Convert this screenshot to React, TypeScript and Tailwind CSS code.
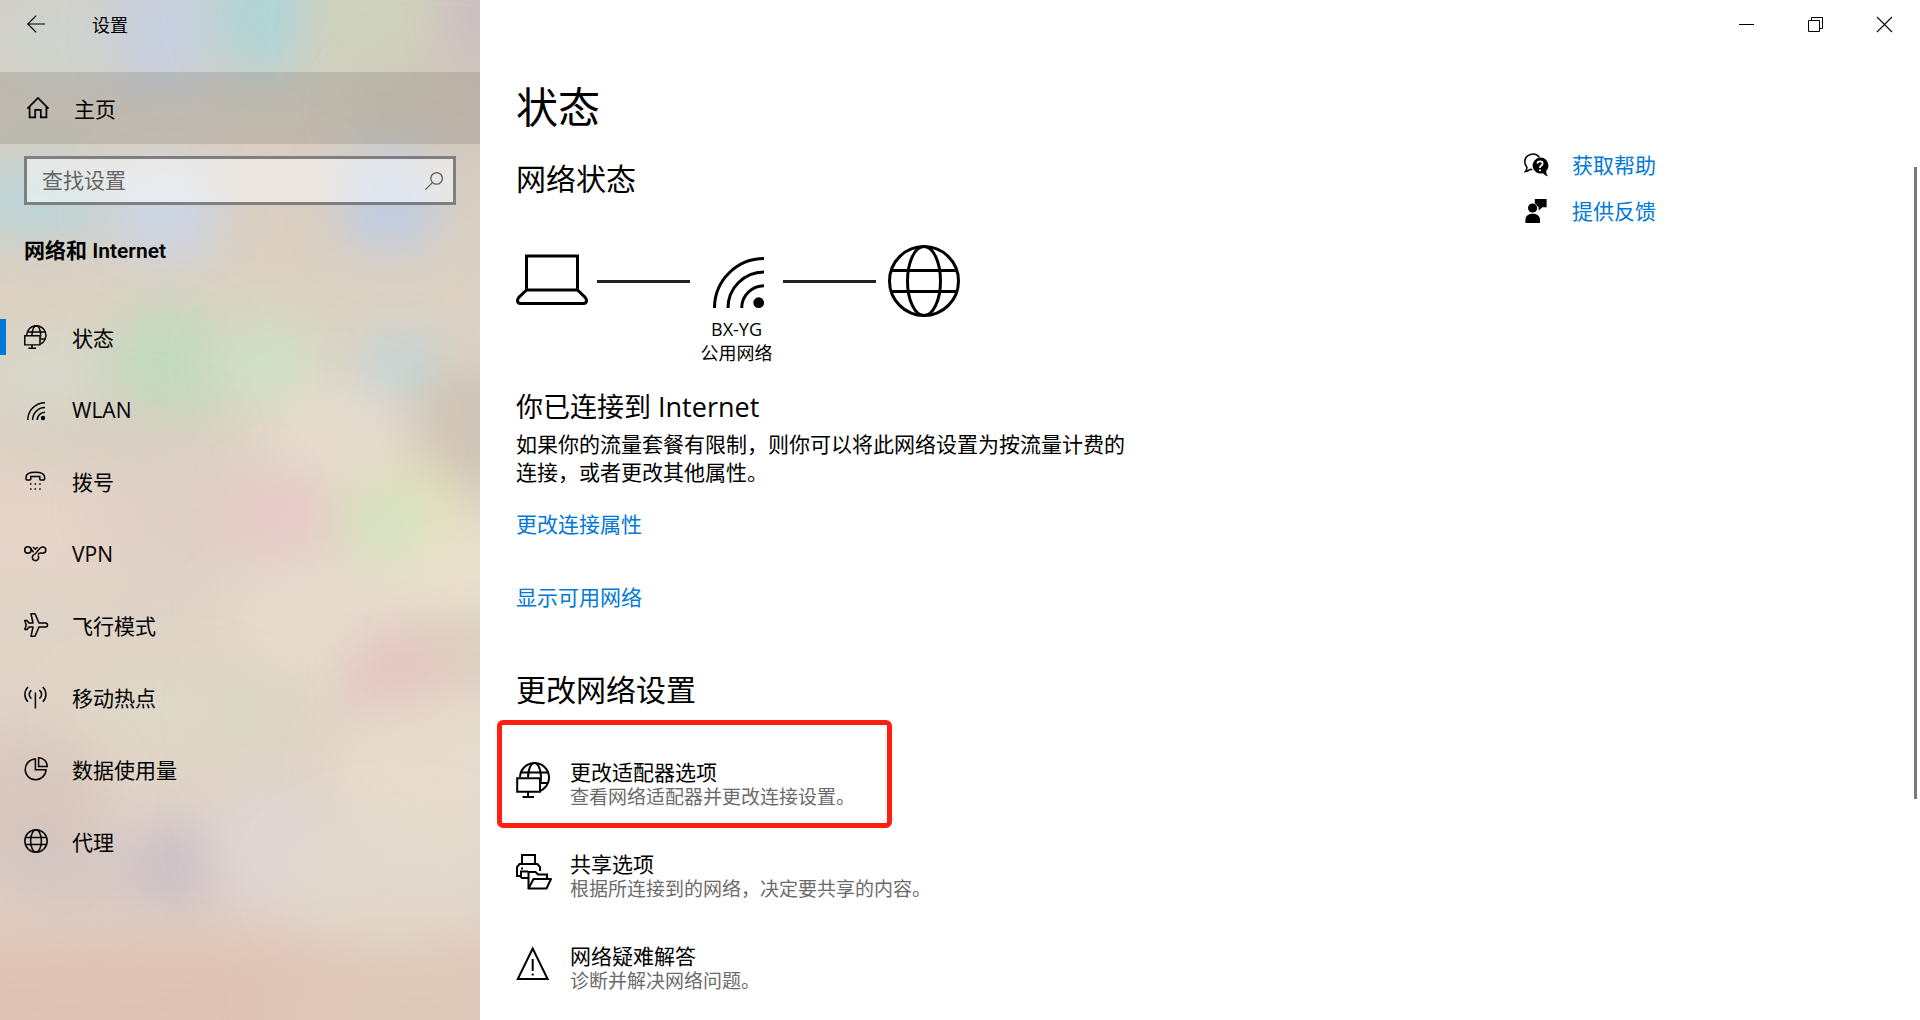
import type { ReactNode } from "react";

function Svg({ w, h, sw = 1.5, className, children }: { w: number; h: number; sw?: number; className?: string; children: ReactNode }) {
  return (
    <svg
      width={w}
      height={h}
      viewBox={`0 0 ${w} ${h}`}
      fill="none"
      stroke="currentColor"
      strokeWidth={sw}
      className={`shrink-0 overflow-visible ${className ?? ""}`}
      aria-hidden="true"
    >
      {children}
    </svg>
  );
}

function NetworkShapes({ id }: { id: string }) {
  return (
    <>
      <clipPath id={id}>
        <path d="M-2-2H38V38H25V15H-2Z" />
      </clipPath>
      <g clipPath={`url(#${id})`}>
        <circle cx="18.5" cy="15.5" r="14.5" />
        <ellipse cx="18.5" cy="15.5" rx="6.5" ry="14.5" />
        <path d="M5 10.5H32M25 21H32" />
      </g>
      <path d="M1.2 16.2H24V29.8H1.2ZM12 30V34.5M6.5 35H18" />
    </>
  );
}

const icons: Record<string, ReactNode> = {
  status: (
    <svg width="24" height="24" viewBox="0 0 36 36" fill="none" stroke="currentColor" strokeWidth="2.2" className="shrink-0" aria-hidden="true">
      <NetworkShapes id="net-small" />
    </svg>
  ),
  wlan: (
    <Svg w={24} h={24}>
      <path d="M3.8 23A17.2 17.2 0 0 1 21 5.8M8.6 23A12.4 12.4 0 0 1 21 10.6M13.2 23A7.8 7.8 0 0 1 21 15.2" />
      <circle cx="19" cy="21" r="2.2" fill="currentColor" stroke="none" />
    </Svg>
  ),
  dial: (
    <Svg w={24} h={24}>
      <path d="M2 10V8.2C2 5 6 3.2 11.3 3.2S20.6 5 20.6 8.2V10Q20.6 11 19.6 11H16.8Q15.8 11 15.8 10V7.6H6.8V10Q6.8 11 5.8 11H3Q2 11 2 10Z" />
      <path d="M6 15h1.5M10.6 15h1.5M15.2 15h1.5M6 20h1.5M10.6 20h1.5M15.2 20h1.5" />
    </Svg>
  ),
  vpn: (
    <Svg w={24} h={24}>
      <circle cx="3.9" cy="9" r="3.2" />
      <path d="M6.3 6.8L9.6 11.4" />
      <path d="M10.4 13.4C12.6 13 14.6 6 18.7 6A3.1 3.1 0 1 1 18.7 12.2C16 12.2 15.4 11.2 14 13.6" />
      <path d="M10.4 13.4A3.2 3.2 0 1 0 14 14.4" />
      <path d="M9 6L11.3 8.2L13.6 6" />
    </Svg>
  ),
  plane: (
    <Svg w={24} h={24}>
      <path
        strokeLinejoin="round"
        d="M15 10L11 .8H7L9 10H5L3 7.6H.8L2.2 12L.8 16.4H3L5 14H9L7 23.2H11L15 14H21.5A2 2 0 0 0 21.5 10Z"
      />
    </Svg>
  ),
  hotspot: (
    <Svg w={24} h={24}>
      <path d="M11.4 7.5V23.5M4 2Q.9 5.2 .9 9.4T4 16.8M7.4 5.2Q5.2 7 5.2 9.4T7.4 13.6M18.8 2Q21.9 5.2 21.9 9.4T18.8 16.8M15.4 5.2Q17.6 7 17.6 9.4T15.4 13.6" />
    </Svg>
  ),
  usage: (
    <Svg w={24} h={24}>
      <path d="M11.4 2A10.4 10.4 0 1 0 22 12.7H11.4Z" />
      <path d="M14.6 .8V9.4H23.2A8.6 8.6 0 0 0 14.6 .8Z" />
    </Svg>
  ),
  globe: (
    <Svg w={24} h={24}>
      <circle cx="12" cy="12" r="11.2" />
      <ellipse cx="12" cy="12" rx="5.4" ry="11.2" />
      <path d="M1.6 8.5H22.4M1.6 15.5H22.4" />
    </Svg>
  ),
};

const nav = [
  { icon: "status", label: "状态", current: true },
  { icon: "wlan", label: "WLAN" },
  { icon: "dial", label: "拨号" },
  { icon: "vpn", label: "VPN" },
  { icon: "plane", label: "飞行模式" },
  { icon: "hotspot", label: "移动热点" },
  { icon: "usage", label: "数据使用量" },
  { icon: "globe", label: "代理" },
];

const options = [
  {
    title: "更改适配器选项",
    text: "查看网络适配器并更改连接设置。",
    marked: true,
    icon: (
      <Svg w={36} h={36} sw={2}>
        <NetworkShapes id="net-large" />
      </Svg>
    ),
  },
  {
    title: "共享选项",
    text: "根据所连接到的网络，决定要共享的内容。",
    icon: (
      <Svg w={36} h={36} sw={2}>
        <path d="M6 10V1H19V10M5 22H1V13L3.5 10H21.5L24 13V17M5 24V17.5H12M5 24H12" />
        <path d="M12.5 34.5V18H19.5L22 20.5H31V25" />
        <path strokeLinejoin="round" d="M12.5 34.5L17.5 25H35L30.5 34.5Z" />
        <path d="M5 14.5H7" />
      </Svg>
    ),
  },
  {
    title: "网络疑难解答",
    text: "诊断并解决网络问题。",
    icon: (
      <Svg w={36} h={36} sw={2}>
        <path d="M16.7 2.5L1.8 33H31.6ZM16.7 13V25M16.7 27.5V29.5" />
      </Svg>
    ),
  },
];

/* Soft patches of colour behind the translucent navigation pane. */
const patches: [number, number, number, number, string, number][] = [
  [60, 40, 70, 45, "#cdd5d0", 0.8],
  [165, 30, 58, 60, "#c6d0e1", 0.95],
  [262, 15, 52, 62, "#afd5d7", 0.95],
  [375, 30, 60, 55, "#cdd3ba", 0.9],
  [480, 20, 35, 60, "#ccbbbf", 0.9],
  [440, 110, 90, 60, "#cfc4b8", 0.6],
  [40, 200, 80, 42, "#bcd4d9", 0.95],
  [165, 210, 60, 52, "#ccd6e6", 0.95],
  [280, 180, 50, 30, "#dccbc5", 0.6],
  [390, 200, 52, 52, "#bfcce1", 1],
  [50, 380, 60, 45, "#d5dccf", 0.8],
  [168, 365, 62, 64, "#c1dabd", 0.95],
  [268, 365, 54, 46, "#cfe2c8", 0.9],
  [400, 372, 44, 40, "#c0d6d9", 0.95],
  [470, 430, 75, 60, "#cdc1b3", 0.8],
  [100, 440, 120, 40, "#d6cdc0", 0.6],
  [340, 440, 80, 60, "#e8dfd0", 0.7],
  [30, 530, 100, 55, "#e8d4c9", 0.8],
  [190, 510, 90, 60, "#dfcdc5", 0.6],
  [282, 518, 48, 50, "#eac8c9", 0.75],
  [408, 525, 58, 58, "#e4e3b6", 0.85],
  [390, 530, 42, 46, "#d0e2c5", 0.85],
  [475, 575, 70, 50, "#ece3cf", 0.8],
  [330, 620, 110, 70, "#eaded0", 0.6],
  [480, 650, 70, 35, "#dbcdbb", 0.7],
  [398, 680, 50, 48, "#e3c0bf", 0.85],
  [170, 710, 100, 45, "#dfdac6", 0.7],
  [260, 720, 50, 50, "#d9d7c5", 0.5],
  [440, 770, 110, 80, "#e9dece", 0.7],
  [20, 800, 90, 70, "#d6c2b9", 0.7],
  [60, 870, 70, 45, "#cfc3c2", 0.6],
  [172, 865, 52, 48, "#cbc0c9", 0.85],
  [275, 850, 60, 60, "#dfd8da", 0.75],
  [400, 880, 120, 70, "#e3dccf", 0.7],
  [100, 1000, 240, 60, "#dfc2b5", 0.9],
  [420, 1010, 160, 50, "#dec8b8", 0.9],
];

function Wallpaper() {
  return (
    <svg className="absolute inset-0 -z-10 h-full w-full" viewBox="0 0 480 1020" preserveAspectRatio="none" aria-hidden="true">
      <defs>
        <filter id="soft" x="-80%" y="-80%" width="260%" height="260%">
          <feGaussianBlur stdDeviation="24" />
        </filter>
        <linearGradient id="base" x1="0" y1="0" x2="0" y2="1">
          <stop offset="0" stopColor="#d3cdc4" />
          <stop offset=".2" stopColor="#d9cfc0" />
          <stop offset=".45" stopColor="#dfd3c6" />
          <stop offset=".8" stopColor="#e1d4c8" />
          <stop offset="1" stopColor="#dfc5b8" />
        </linearGradient>
      </defs>
      <rect width="480" height="1020" fill="url(#base)" />
      {patches.map(([cx, cy, rx, ry, fill, opacity]) => (
        <ellipse key={`${cx}-${cy}`} cx={cx} cy={cy} rx={rx} ry={ry} fill={fill} opacity={opacity} filter="url(#soft)" />
      ))}
    </svg>
  );
}

function Sidebar() {
  return (
    <aside className="relative isolate flex w-[480px] shrink-0 flex-col overflow-hidden">
      <Wallpaper />
      <div className="flex h-[72px] items-start">
        <button type="button" aria-label="返回" className="flex h-12 w-[72px] items-center justify-center">
          <Svg w={18} h={18} sw={1.2}>
            <path d="M18 9H.8M9.2 .6L.8 9L9.2 17.4" />
          </Svg>
        </button>
        <span className="ml-5 text-[18px] leading-[50px]">设置</span>
      </div>
      <a href="#home" className="flex h-[72px] items-center gap-6 bg-black/10 pl-[26px]">
        <Svg w={24} h={24} sw={1.7}>
          <path d="M1.4 12.6L12 2L22.6 12.6M3.6 10.6V21.4H9.2V13.8H14.8V21.4H20.4V10.6" />
        </Svg>
        <span className="pt-0.5 text-[21px] leading-7">主页</span>
      </a>
      <label className="mx-6 mt-3 flex h-[49px] items-center border-3 border-black/45 bg-white/50 pr-2.5 pl-[15px] text-[#5f5f5f]">
        <input
          type="text"
          aria-label="查找设置"
          placeholder="查找设置"
          className="min-w-0 flex-1 bg-transparent pb-0.5 text-[21px] leading-7 outline-none placeholder:text-[#666]"
        />
        <Svg w={18} h={18} sw={1.3}>
          <circle cx="11.6" cy="6.4" r="5.8" />
          <path d="M7.4 10.6L.4 17.6" />
        </Svg>
      </label>
      <h2 className="mt-8 ml-6 font-['Roboto','Noto_Sans_CJK_SC',sans-serif] text-[21px] leading-7 font-semibold">
        网络和 Internet
      </h2>
      <nav className="mt-9">
        <ul>
          {nav.map((item) => (
            <li key={item.label}>
              <a
                href={`#${item.icon}`}
                aria-current={item.current ? "page" : undefined}
                className="relative flex h-[72px] items-center gap-6 pl-6 text-[21px] leading-7"
              >
                {item.current && <span className="absolute left-0 h-9 w-1.5 bg-[#0078d7]" />}
                {icons[item.icon]}
                <span className="pt-0.5">{item.label}</span>
              </a>
            </li>
          ))}
        </ul>
      </nav>
    </aside>
  );
}

function NetworkDiagram() {
  return (
    <div className="mt-[46px] flex items-start">
      <Svg w={72} h={72} sw={3}>
        <path d="M10.5 11H61.5V45H10.5Z" />
        <path d="M10.5 45L2.8 52.4Q1.5 53.8 1.5 55.6Q1.5 58.5 4.5 58.5H67.5Q70.5 58.5 70.5 55.6Q70.5 53.8 69.2 52.4L61.5 45" />
      </Svg>
      <span className="mt-[35px] ml-[9px] h-[3px] w-[93px] bg-[#222]" />
      <div className="flex w-[93px] flex-col items-center text-[18px] leading-6">
        <Svg w={93} h={72} sw={3}>
          <path d="M24.5 63A49.5 49.5 0 0 1 74 13.5M38 63A36 36 0 0 1 74 27M51.7 63A22.3 22.3 0 0 1 74 40.7" />
          <circle cx="68.7" cy="57.7" r="5.4" fill="currentColor" stroke="none" />
        </Svg>
        <span>BX-YG</span>
        <span>公用网络</span>
      </div>
      <span className="mt-[35px] mr-3 h-[3px] w-[93px] bg-[#222]" />
      <Svg w={72} h={72} sw={3}>
        <circle cx="36" cy="36" r="34.5" />
        <ellipse cx="36" cy="36" rx="16.5" ry="34.5" />
        <path d="M3.5 25.5H68.5M3.5 46.5H68.5" />
      </Svg>
    </div>
  );
}

function WindowControls() {
  const button = "flex h-12 w-[69px] items-center justify-center";
  return (
    <header className="flex h-12 justify-end pr-px">
      <button type="button" aria-label="最小化" className={button}>
        <Svg w={15} h={15} sw={1}>
          <path d="M0 7.5H15" />
        </Svg>
      </button>
      <button type="button" aria-label="还原" className={button}>
        <Svg w={15} h={15} sw={1}>
          <path d="M.5 3.5H11.5V14.5H.5ZM3.5 3.5V.5H14.5V11.5H11.5" />
        </Svg>
      </button>
      <button type="button" aria-label="关闭" className={button}>
        <Svg w={15} h={15} sw={1.1}>
          <path d="M0 0L15 15M15 0L0 15" />
        </Svg>
      </button>
    </header>
  );
}

function HelpLinks() {
  return (
    <aside className="flex w-[396px] shrink-0 flex-col gap-[18px] pt-4 text-[21px] leading-7">
      <a href="#help" className="flex items-center gap-6">
        <Svg w={24} h={24} className="text-black">
          <path d="M15.4 4.4A8 7.6 0 0 0 .8 8.6Q.8 12 3 14.4Q3 16.4 1.4 18.4Q4.4 18 6 16.4H8.4" />
          <path fill="currentColor" stroke="none" d="M16 4.6A8 8 0 1 0 19 20.2Q21 22.8 24 23.6Q22 21 22.2 18A8 8 0 0 0 16 4.6Z" />
          <path stroke="#fff" strokeWidth="1.8" d="M13.4 10.4Q13.4 8.4 16 8.4T18.6 10.4Q18.6 11.8 17.2 12.6Q16 13.2 16 15M16 16.4V18.2" />
        </Svg>
        <span className="text-[#0078d7]">获取帮助</span>
      </a>
      <a href="#feedback" className="flex items-center gap-6">
        <Svg w={24} h={24} className="text-black">
          <g fill="currentColor" stroke="none">
            <path d="M10.8 0H22.6V8.2H18.4L14.6 11.6V8.2L10.8 4Z" />
            <circle cx="8.6" cy="9" r="4.6" />
            <path d="M1.4 24V21.5C1.4 17 4 14.8 8.7 14.8S16 17 16 21.5V24Z" />
          </g>
        </Svg>
        <span className="text-[#0078d7]">提供反馈</span>
      </a>
    </aside>
  );
}

export default function App() {
  return (
    <div className="flex min-h-screen bg-white font-['Open_Sans','Noto_Sans_CJK_SC',sans-serif] text-black" lang="zh-CN">
      <Sidebar />
      <div className="relative min-w-0 flex-1">
        <WindowControls />
        <main className="pl-9">
          <h1 className="mt-[31px] text-[42px] leading-[56px]">状态</h1>
          <div className="flex">
            <div className="min-w-0 flex-1">
              <section>
                <h2 className="mt-6 text-[30px] leading-10">网络状态</h2>
                <NetworkDiagram />
                <h3 className="mt-6 text-[27px] leading-9">你已连接到 Internet</h3>
                <p className="mt-[5px] max-w-[620px] text-[21px] leading-7">
                  如果你的流量套餐有限制，则你可以将此网络设置为按流量计费的连接，或者更改其他属性。
                </p>
                <div className="mt-6 flex flex-col items-start gap-[45px] text-[21px] leading-7 text-[#0078d7]">
                  <a href="#properties">更改连接属性</a>
                  <a href="#networks">显示可用网络</a>
                </div>
              </section>
              <section>
                <h2 className="mt-[59px] text-[30px] leading-10">更改网络设置</h2>
                <ul className="mt-[50px] flex flex-col gap-[42px]">
                  {options.map((option) => (
                    <li key={option.title} className="relative">
                      {option.marked && (
                        <span className="pointer-events-none absolute -top-10 -left-[19px] h-[108px] w-[395px] rounded-md border-5 border-[#ff2013]" />
                      )}
                      <a href="#option" className="flex items-start gap-[18px]">
                        <span className="pt-0.5">{option.icon}</span>
                        <span className="flex flex-col">
                          <span className="text-[21px] leading-[25px]">{option.title}</span>
                          <span className="text-[19px] leading-[25px] text-[#6b6b6b]">{option.text}</span>
                        </span>
                      </a>
                    </li>
                  ))}
                </ul>
              </section>
            </div>
            <HelpLinks />
          </div>
        </main>
        <span className="absolute top-[167px] right-[3px] h-[632px] w-[3px] bg-[#7a7a7a]" />
      </div>
    </div>
  );
}
